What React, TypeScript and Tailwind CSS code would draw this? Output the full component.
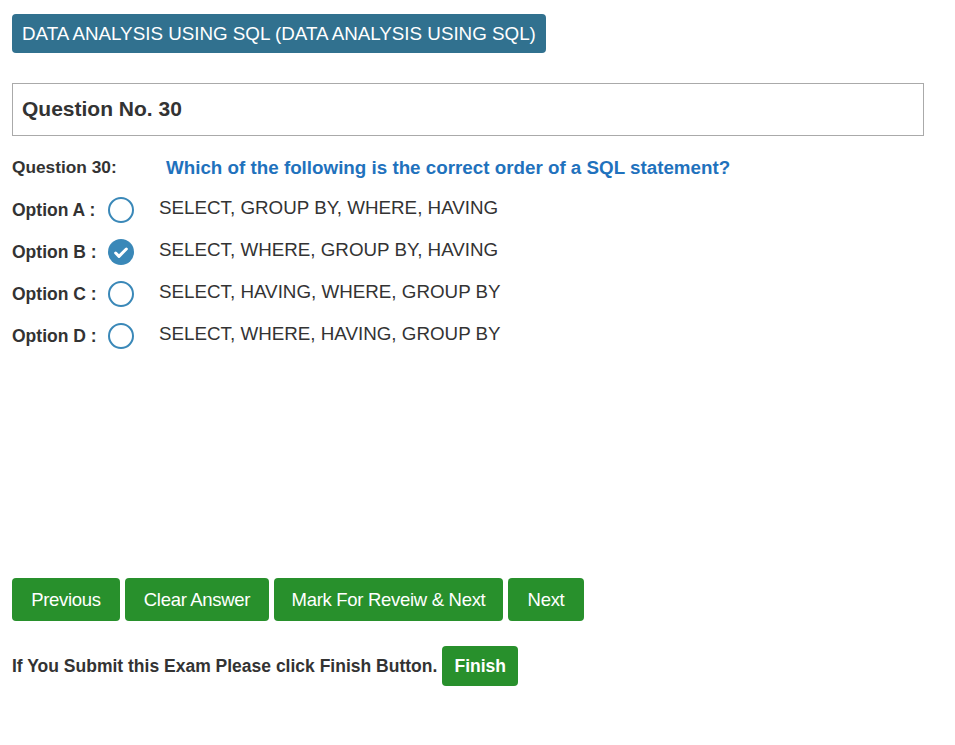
import { Check } from "lucide-react";

const options = [
  { key: "A", text: "SELECT, GROUP BY, WHERE, HAVING", checked: false },
  { key: "B", text: "SELECT, WHERE, GROUP BY, HAVING", checked: true },
  { key: "C", text: "SELECT, HAVING, WHERE, GROUP BY", checked: false },
  { key: "D", text: "SELECT, WHERE, HAVING, GROUP BY", checked: false },
];

const navButtons = [
  { label: "Previous", w: "w-[108px]" },
  { label: "Clear Answer", w: "w-[144px]" },
  { label: "Mark For Reveiw & Next", w: "w-[229px]" },
  { label: "Next", w: "w-[76px]" },
];

function Radio({ checked }: { checked: boolean }) {
  if (checked) {
    return (
      <span className="w-[26px] h-[26px] rounded-full bg-[#3a88b8] flex items-center justify-center">
        <Check size={16} strokeWidth={4.5} className="text-white mt-[1px]" />
      </span>
    );
  }
  return <span className="w-[26px] h-[26px] rounded-full border-2 border-[#3a88b8] bg-white" />;
}

export default function App() {
  return (
    <div className="min-h-screen bg-white px-3 pt-[14px] text-[#333] font-['Liberation_Sans',Arial,sans-serif]">
      {/* Subject badge */}
      <div className="inline-flex items-center h-[39px] px-[10px] pt-[1px] rounded-[4px] bg-[#31718f] text-white text-[18.8px]">
        DATA ANALYSIS USING SQL (DATA ANALYSIS USING SQL)
      </div>

      {/* Question header */}
      <div className="mt-[30px] w-[912px] h-[53px] border border-[#aaa] flex items-center px-[9px] pb-[1px]">
        <span className="text-[21px] font-bold">Question No. 30</span>
      </div>

      {/* Question */}
      <div className="mt-[20px] flex items-center h-[24px]">
        <span className="w-[154px] text-[17.3px] font-bold">Question 30:</span>
        <span className="text-[18.8px] font-bold text-[#1f72bd]">
          Which of the following is the correct order of a SQL statement?
        </span>
      </div>

      {/* Options */}
      <div className="mt-[17px] flex flex-col gap-[16px]">
        {options.map((o) => (
          <div key={o.key} className="flex items-center h-[26px]">
            <span className="w-[96px] text-[17.5px] font-bold">Option {o.key} :</span>
            <Radio checked={o.checked} />
            <span className="ml-[25px] text-[18.8px] -mt-[4px]">{o.text}</span>
          </div>
        ))}
      </div>

      {/* Navigation */}
      <div className="mt-[229px] flex gap-[5px]">
        {navButtons.map((b) => (
          <button
            key={b.label}
            className={`${b.w} h-[43px] rounded-[4px] bg-[#28902c] text-white text-[18.5px] tracking-[-0.3px]`}
          >
            {b.label}
          </button>
        ))}
      </div>

      <div className="mt-[25px] flex items-center gap-[5px]">
        <span className="text-[17.5px] font-bold">If You Submit this Exam Please click Finish Button.</span>
        <button className="w-[76px] h-[40px] rounded-[4px] bg-[#28902c] text-white text-[17.5px] font-bold">
          Finish
        </button>
      </div>
    </div>
  );
}
